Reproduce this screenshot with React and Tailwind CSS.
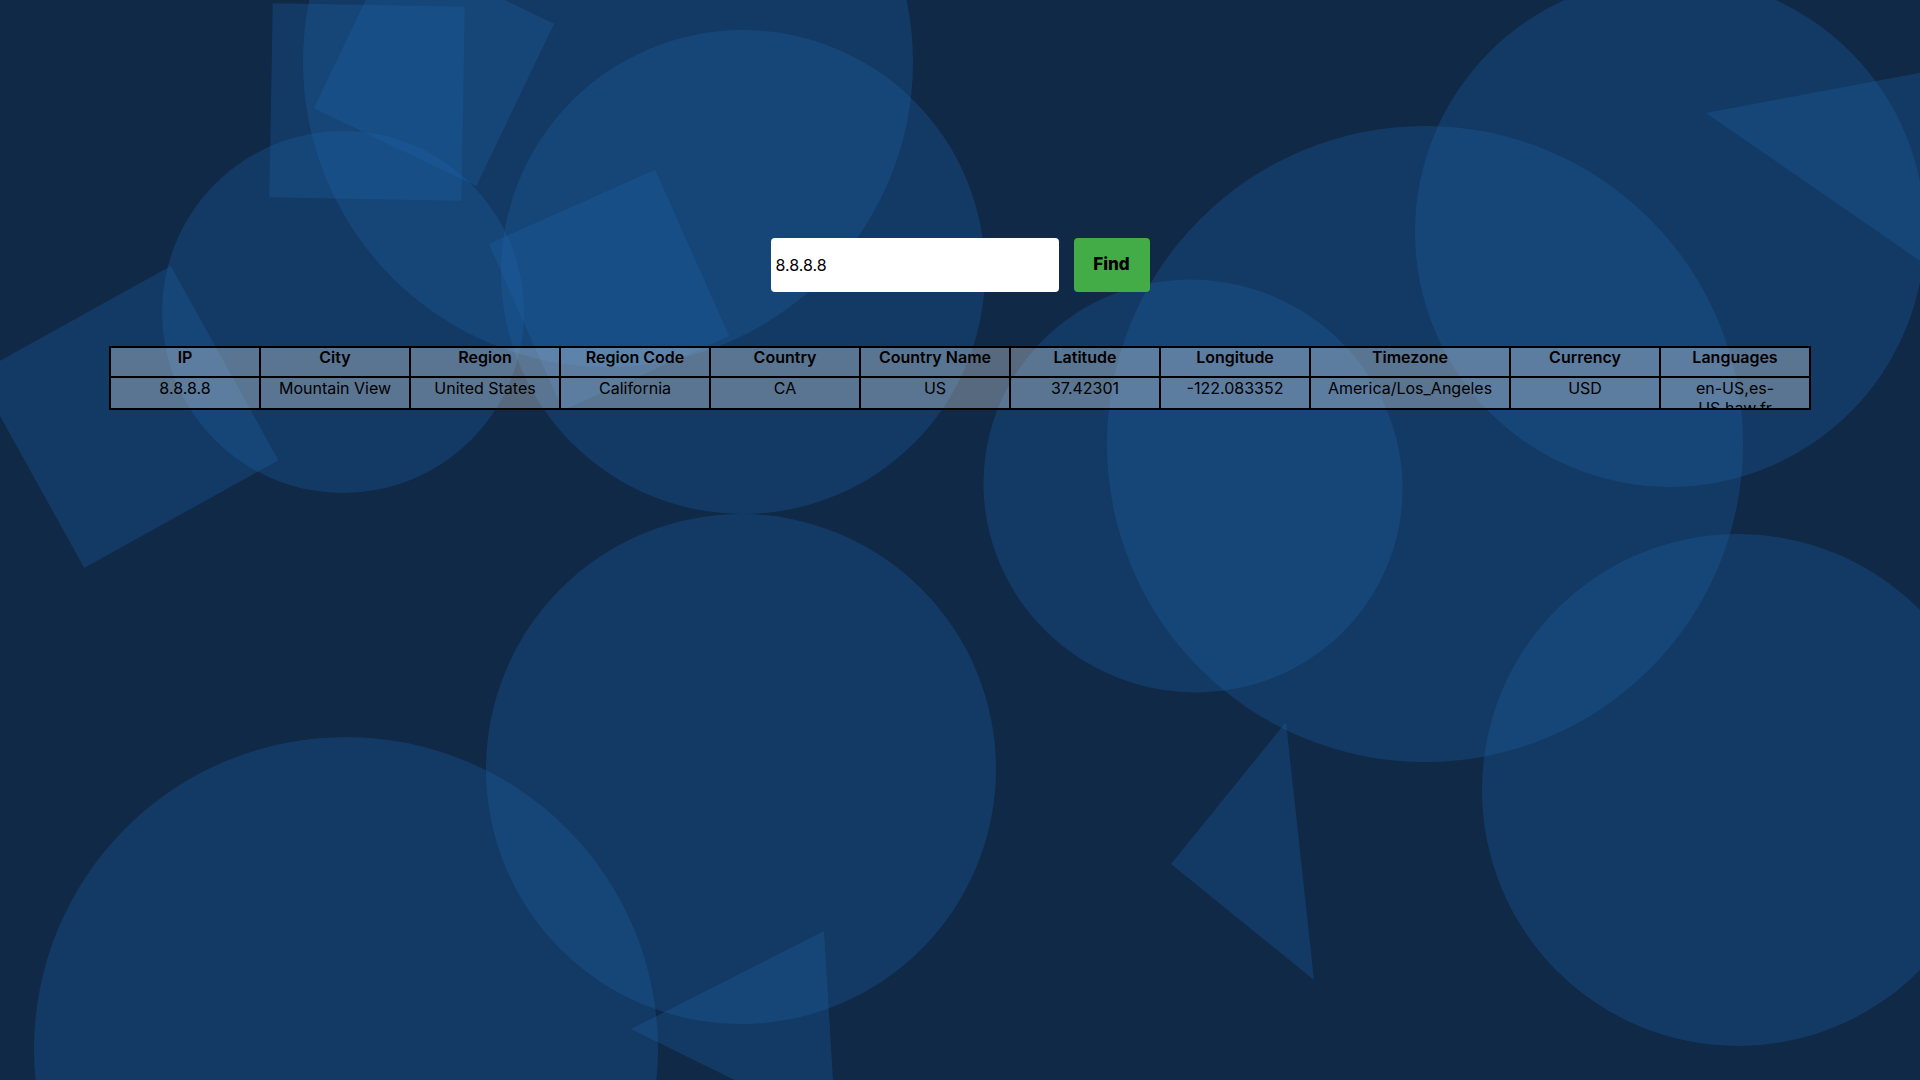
import React from "react";

const headers = ["IP","City","Region","Region Code","Country","Country Name","Latitude","Longitude","Timezone","Currency","Languages"];
const values = ["8.8.8.8","Mountain View","United States","California","CA","US","37.42301","-122.083352","America/Los_Angeles","USD","en-US,es-US,haw,fr"];

function Background() {
  const f = "rgba(30,100,170,0.3)";
  return (
    <svg className="absolute inset-0 w-full h-full" viewBox="0 0 1920 1080" preserveAspectRatio="none">
      <rect x="271" y="5" width="192" height="194" fill={f} transform="rotate(1 367 102)" />
      <rect x="344" y="-24" width="180" height="180" fill={f} transform="rotate(25.6 434 66)" />
      <circle cx="608" cy="62" r="305" fill={f} />
      <circle cx="743" cy="272" r="242" fill={f} />
      <circle cx="343" cy="312" r="181" fill={f} />
      <rect x="16.5" y="306" width="222" height="222" fill={f} transform="rotate(-29 127.5 417)" />
      <rect x="518" y="199" width="182" height="182" fill={f} transform="rotate(-24 609 290)" />
      <circle cx="1425" cy="444" r="318" fill={f} />
      <ellipse cx="1193" cy="486" rx="210" ry="206" fill={f} transform="rotate(20 1193 486)" />
      <circle cx="1670" cy="232" r="255" fill={f} />
      <polygon points="1706,113 2100,39 2100,385" fill={f} />
      <circle cx="1738" cy="790" r="256" fill={f} />
      <polygon points="1286,722 1171,864 1314,980" fill={f} />
      <circle cx="741" cy="769" r="255" fill={f} />
      <circle cx="346" cy="1049" r="312" fill={f} />
      <polygon points="631,1029 824,931 836,1130" fill={f} />
    </svg>
  );
}

export default function App() {
  return (
    <div className="relative w-full h-screen overflow-hidden bg-[#0f2947]" style={{ fontFamily: "Inter, 'Noto Sans', sans-serif" }}>
      <Background />
      <div className="relative flex flex-col items-center pt-[238px]">
        <div className="flex items-center gap-[15px]">
          <input
            type="text"
            defaultValue="8.8.8.8"
            className="w-[288px] h-[54px] bg-white rounded-[4px] pl-[5px] text-[16px] text-black outline-none"
          />
          <button className="w-[76px] h-[54px] bg-[#44ac47] rounded-[4px] text-[17px] font-extrabold text-black">
            Find
          </button>
        </div>
        <table className="mt-[54px] w-[1700px] table-fixed border-collapse border-2 border-black text-black text-[16px]">
          <colgroup>
            {headers.map((h) => (
              <col key={h} className={h === "Timezone" ? "w-[200px]" : "w-[150px]"} />
            ))}
          </colgroup>
          <thead>
            <tr>
              {headers.map((h) => (
                <th key={h} className="border-2 border-black bg-white/30 p-0 align-top font-semibold">
                  <div className="h-[28px] overflow-hidden leading-[18px]">{h}</div>
                </th>
              ))}
            </tr>
          </thead>
          <tbody>
            <tr>
              {values.map((v, i) => (
                <td key={i} className="border-2 border-black bg-white/30 p-0 align-top text-center">
                  <div className="h-[30px] overflow-hidden leading-[20px] px-[4px] break-words">{v}</div>
                </td>
              ))}
            </tr>
          </tbody>
        </table>
      </div>
    </div>
  );
}
